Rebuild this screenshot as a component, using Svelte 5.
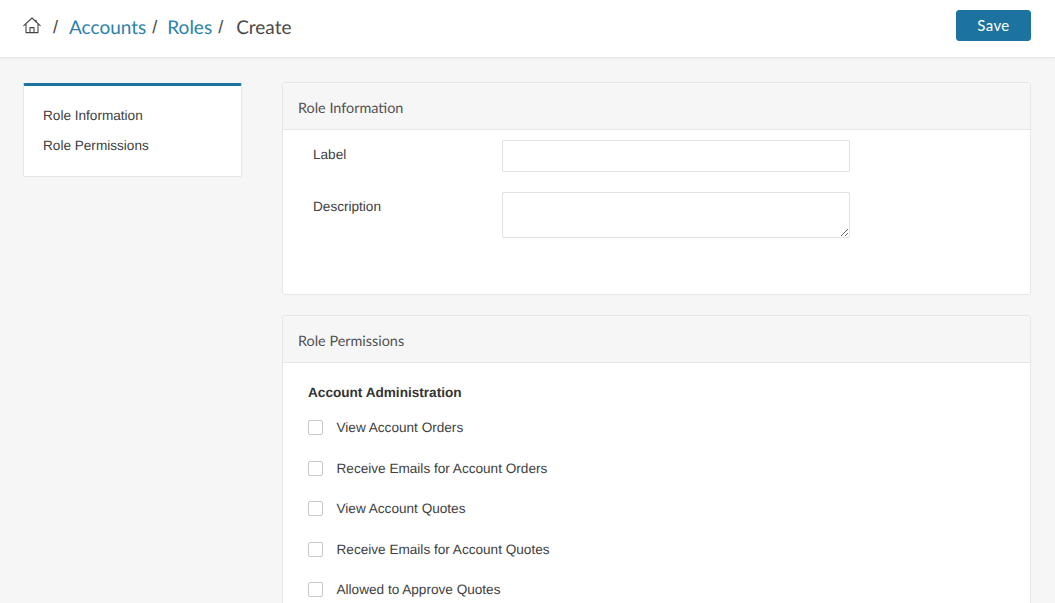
<script>
  const perms = [
    'View Account Orders',
    'Receive Emails for Account Orders',
    'View Account Quotes',
    'Receive Emails for Account Quotes',
    'Allowed to Approve Quotes'
  ];
</script>

<div class="page">
  <header class="topbar">
    <nav class="crumbs">
      <svg class="home" viewBox="0 0 18 17" width="18" height="17" fill="none" stroke="#444" stroke-width="1.1" stroke-linejoin="round" stroke-linecap="round">
        <path d="M0.8 8.6 9 1l8.2 7.6" />
        <path d="M3 7v8.6h12V7" />
        <path d="M7 15.6v-5h4v5" />
        <path d="M13 3.2V5" />
      </svg>
      <span class="sep first">/</span>
      <a href="#accounts">Accounts</a>
      <span class="sep">/</span>
      <a class="roles" href="#roles">Roles</a>
      <span class="sep last">/</span>
      <span class="current">Create</span>
    </nav>
    <button class="save">Save</button>
  </header>

  <div class="body">
    <aside class="side">
      <a href="#info">Role Information</a>
      <a href="#perms">Role Permissions</a>
    </aside>

    <main class="main">
      <section class="card info">
        <h2>Role Information</h2>
        <div class="fields">
          <div class="field">
            <label for="label">Label</label>
            <input id="label" type="text" />
          </div>
          <div class="field">
            <label for="desc">Description</label>
            <textarea id="desc"></textarea>
          </div>
        </div>
      </section>

      <section class="card">
        <h2>Role Permissions</h2>
        <div class="perms">
          <h3>Account Administration</h3>
          <div class="perm-list">
            {#each perms as p}
              <label class="perm"><span class="box"></span><span class="perm-text">{p}</span></label>
            {/each}
          </div>
        </div>
      </section>
    </main>
  </div>
</div>

<style>
  :global(body) {
    margin: 0;
    background: #f6f6f6;
  }
  .page {
    height: 603px;
    overflow: hidden;
    background: #f6f6f6;
    font-family: "Liberation Sans", Arial, sans-serif;
    color: #414141;
    font-size: 13.6px;
    text-rendering: geometricPrecision;
  }
  .topbar {
    height: 58px;
    box-sizing: border-box;
    background: #fff;
    border-bottom: 1px solid #e8e8e8;
    box-shadow: 0 1px 2px rgba(0, 0, 0, 0.04);
    display: flex;
    align-items: flex-start;
    justify-content: space-between;
    padding: 10px 24px 0 23px;
  }
  .crumbs {
    display: flex;
    align-items: baseline;
    font-family: Lato, "Noto Sans", sans-serif;
    font-size: 19px;
    line-height: 36px;
    color: #4a4a4a;
  }
  .home {
    align-self: flex-start;
    margin-top: 7px;
  }
  .crumbs a {
    color: #2d82a8;
    text-decoration: none;
  }
  .sep {
    margin: 0 10px 0 6px;
    font-family: "Liberation Sans", sans-serif;
    font-size: 18px;
    position: relative;
    top: -1px;
  }
  .sep.first {
    margin: 0 11px 0 12px;
  }
  .sep.last {
    margin: 0 13px 0 6px;
  }
  .save {
    width: 75px;
    height: 31px;
    border: 1px solid #1c739f;
    border-radius: 3px;
    background: #1c739f;
    color: #fff;
    font-family: Lato, "Noto Sans", sans-serif;
    font-size: 15px;
    letter-spacing: 0.4px;
    padding: 0 0 2px;
  }
  .body {
    display: grid;
    grid-template-columns: 219px 749px;
    gap: 40px;
    align-items: start;
    padding: 24px 0 0 23px;
  }
  .side {
    box-sizing: border-box;
    height: 94px;
    margin-top: 1px;
    background: #fff;
    border: 1px solid #e6e6e6;
    border-top: 3px solid #1c739f;
    border-radius: 2px;
    padding: 22px 19px 0;
    display: flex;
    flex-direction: column;
    gap: 14px;
  }
  .side a {
    color: #414141;
    text-decoration: none;
    line-height: 16px;
  }
  .main {
    display: flex;
    flex-direction: column;
    gap: 20px;
  }
  .card {
    background: #fff;
    border: 1px solid #e6e6e6;
    border-radius: 3px;
  }
  .info {
    height: 213px;
    box-sizing: border-box;
  }
  h2 {
    margin: 0;
    height: 47px;
    box-sizing: border-box;
    background: #f6f6f6;
    border-bottom: 1px solid #e6e6e6;
    border-radius: 3px 3px 0 0;
    padding: 0 15px;
    font-family: Lato, "Noto Sans", sans-serif;
    font-weight: 400;
    font-size: 14.4px;
    line-height: 51px;
    color: #525252;
  }
  .fields {
    padding: 10px 30px 0;
    display: flex;
    flex-direction: column;
    gap: 20px;
  }
  .field {
    display: flex;
    align-items: flex-start;
  }
  .field label {
    width: 189px;
    flex: none;
    line-height: 16px;
    padding-top: 7px;
  }
  input,
  textarea {
    box-sizing: border-box;
    width: 348px;
    background: #fff;
    border: 1px solid #e2e2e2;
    border-radius: 1px;
    margin: 0;
    display: block;
    outline: none;
  }
  input {
    height: 32px;
  }
  textarea {
    height: 46px;
  }
  .perms {
    padding: 21px 25px 60px;
  }
  h3 {
    margin: 0 0 18.5px;
    font-size: 13.6px;
    line-height: 17px;
    color: #333;
  }
  .perm-list {
    display: flex;
    flex-direction: column;
    gap: 24.5px;
  }
  .perm {
    display: flex;
    align-items: center;
    height: 16px;
    line-height: 16px;
  }
  .perm-text {
    margin-top: 1px;
  }
  .box {
    box-sizing: border-box;
    width: 15px;
    height: 15px;
    border: 1px solid #c8c8c8;
    border-radius: 2px;
    background: #fff;
    margin-right: 13.5px;
    flex: none;
  }
</style>
